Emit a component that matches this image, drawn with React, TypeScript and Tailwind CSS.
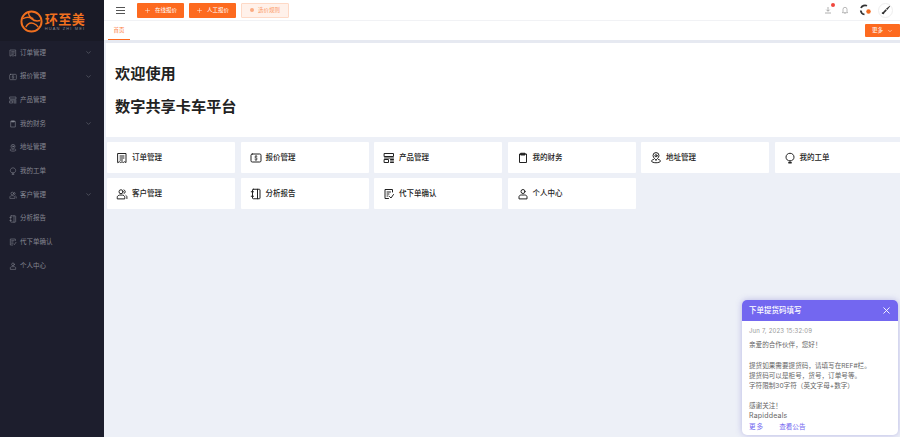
import React from 'react';
import { ChevronDown, Plus, X } from 'lucide-react';

const cjk = "font-['Inter','Noto_Sans_CJK_SC',sans-serif]";

type IconName = 'order' | 'quote' | 'product' | 'finance' | 'address' | 'ticket' | 'customer' | 'report' | 'confirm' | 'person';

function MenuIcon({ name, className, weight = 1.7 }: { name: IconName; className?: string; weight?: number }) {
  const shared = { fill: 'none', stroke: 'currentColor', strokeWidth: weight, strokeLinecap: 'round' as const, strokeLinejoin: 'round' as const };
  return (
    <svg viewBox="0 0 24 24" className={className} {...shared}>
      {name === 'order' && (
        <>
          <path d="M4 3h16v18l-3-1.500-2.500 1.500-2.500-1.500L9.500 21 7 19.500 4 21z" />
          <path d="M8 8h8M8 12h8M8 16h5" />
        </>
      )}
      {name === 'quote' && (
        <>
          <rect x="2" y="4" width="20" height="16" rx="2.500" />
          <path d="M14.500 9.500c-.5-1-1.500-1.300-2.500-1.300-1.400 0-2.500.7-2.500 1.800 0 2.500 5 1.400 5 3.900 0 1.100-1.100 1.900-2.500 1.900-1.100 0-2.100-.4-2.600-1.400M12 6.800v10.400" strokeWidth="1.300" />
        </>
      )}
      {name === 'product' && (
        <>
          <rect x="3" y="3" width="18" height="6" />
          <rect x="3" y="15" width="8" height="6" />
          <path d="M3 12h18M15 15h6M15 18h6M15 21h6" />
        </>
      )}
      {name === 'finance' && (
        <>
          <path d="M8 4H5v17h14V4h-3" />
          <rect x="8" y="2.500" width="8" height="3.500" fill="currentColor" />
        </>
      )}
      {name === 'address' && (
        <>
          <path d="M12 16s-6-4.300-6-8.800a6 6 0 0 1 12 0C18 11.700 12 16 12 16z" />
          <circle cx="12" cy="7.500" r="2.200" />
          <path d="M7 15c-2.500.7-4 1.800-4 3 0 1.900 4 3.500 9 3.500s9-1.600 9-3.500c0-1.200-1.500-2.300-4-3" />
        </>
      )}
      {name === 'ticket' && (
        <>
          <path d="M12 18c-4.500 0-8-3.200-8-7.700C4 6 7.500 2.500 12 2.500s8 3.500 8 7.800c0 4.500-3.500 7.700-8 7.700z" />
          <path d="M9.500 21.500h5" strokeWidth="2.600" />
        </>
      )}
      {name === 'customer' && (
        <>
          <circle cx="10" cy="7.500" r="4" />
          <path d="M2.500 21v-2.500c0-2.800 2.500-4.500 7.500-4.500s7.500 1.700 7.500 4.500V21z" />
          <path d="M16 3.800a4 4 0 0 1 0 7.400M20 14.800c1.200.8 1.800 2 1.800 3.400V21" />
        </>
      )}
      {name === 'report' && (
        <>
          <rect x="5" y="2.500" width="15" height="19" rx="1.500" />
          <path d="M15 2.500v19M2.500 7.500H7M2.500 16.500H7" />
        </>
      )}
      {name === 'confirm' && (
        <>
          <path d="M19 8V3H4v18h7" />
          <path d="M8 8h7M8 12h4M8 16h2M13 17l3 3 5-7" />
        </>
      )}
      {name === 'person' && (
        <>
          <circle cx="12" cy="7" r="4" />
          <path d="M4 21v-3.500C4 15.500 6 14 8.500 14h7c2.500 0 4.500 1.500 4.500 3.500V21z" />
        </>
      )}
    </svg>
  );
}

const sideItems: { label: string; icon: IconName; arrow?: boolean }[] = [
  { label: '订单管理', icon: 'order', arrow: true },
  { label: '报价管理', icon: 'quote', arrow: true },
  { label: '产品管理', icon: 'product' },
  { label: '我的财务', icon: 'finance', arrow: true },
  { label: '地址管理', icon: 'address' },
  { label: '我的工单', icon: 'ticket' },
  { label: '客户管理', icon: 'customer', arrow: true },
  { label: '分析报告', icon: 'report' },
  { label: '代下单确认', icon: 'confirm' },
  { label: '个人中心', icon: 'person' },
];

const cards: { label: string; icon: IconName }[] = [
  { label: '订单管理', icon: 'order' },
  { label: '报价管理', icon: 'quote' },
  { label: '产品管理', icon: 'product' },
  { label: '我的财务', icon: 'finance' },
  { label: '地址管理', icon: 'address' },
  { label: '我的工单', icon: 'ticket' },
  { label: '客户管理', icon: 'customer' },
  { label: '分析报告', icon: 'report' },
  { label: '代下单确认', icon: 'confirm' },
  { label: '个人中心', icon: 'person' },
];

function Logo() {
  return (
    <div className="flex h-[41px] items-center justify-center gap-[2px] bg-[#191a26] pl-[1px] pt-[2px]">
      <svg viewBox="0 0 24 24" className="h-[23px] w-[23px] text-[#f0701f]" fill="none" stroke="currentColor" strokeWidth="2">
        <circle cx="12" cy="12" r="10.500" />
        <path d="M3 9c4-2 7-2 9 0s5 3 9 2M6 18c2-4 5-5 8-4s4 2 5 4M9 3c0 3 2 5 5 6" strokeWidth="1.500" />
      </svg>
      <div className="flex flex-col items-center">
        <span className={`${cjk} text-[13px] font-bold leading-[14px] tracking-[0.5px] text-[#f0701f]`}>环至美</span>
        <span className="font-['Liberation_Sans',sans-serif] text-[4px] leading-[5px] tracking-[1.100px] text-[#8b8b93]">HUAN ZHI MEI</span>
      </div>
    </div>
  );
}

function Sidebar() {
  return (
    <aside className="flex w-[104px] shrink-0 flex-col bg-[#1d1e2d]">
      <Logo />
      <nav className="flex flex-col">
        {sideItems.map((item) => (
          <div key={item.label} className="flex h-[23.700px] items-center pl-[9px] pr-[12px] text-[#858792]">
            <MenuIcon name={item.icon} className="h-[8px] w-[8px]" />
            <span className={`${cjk} ml-[3px] flex-1 text-[6.500px] leading-none`}>{item.label}</span>
            {item.arrow && <ChevronDown className="h-[7px] w-[7px]" strokeWidth={1.500} />}
          </div>
        ))}
      </nav>
    </aside>
  );
}

function TopBar() {
  return (
    <div className="flex h-[21px] items-center border-b border-[#f1f2f5] bg-white pl-[12px] pr-[7px]">
      <div className="flex w-[9px] flex-col gap-[2px]">
        <span className="h-px bg-[#555]" />
        <span className="h-px bg-[#555]" />
        <span className="h-px bg-[#555]" />
      </div>
      <button className={`${cjk} ml-[12px] flex h-[15px] w-[47px] items-center justify-center gap-[4px] rounded-[1px] bg-[#fd6a1f] text-[5.500px] text-white`}>
        <Plus className="h-[7px] w-[7px]" strokeWidth={1.500} />
        在线报价
      </button>
      <button className={`${cjk} ml-[5px] flex h-[15px] w-[47px] items-center justify-center gap-[4px] rounded-[1px] bg-[#fd6a1f] text-[5.500px] text-white`}>
        <Plus className="h-[7px] w-[7px]" strokeWidth={1.500} />
        人工报价
      </button>
      <button className={`${cjk} ml-[5px] flex h-[15px] w-[48px] items-center justify-center gap-[4px] rounded-[1px] border border-[#fed9c6] bg-[#fff1ea] text-[5.500px] text-[#fb9a68]`}>
        <span className="h-[4px] w-[4px] rounded-full bg-[#fbab82]" />
        选价规则
      </button>
      <div className="ml-auto flex items-center">
        <div className="relative">
          <svg viewBox="0 0 24 24" className="h-[8px] w-[8px] text-[#888]" fill="none" stroke="currentColor" strokeWidth="2">
            <path d="M12 3v12M7 11l5 5 5-5M3 21h18" />
          </svg>
          <span className="absolute -right-[3px] -top-[3px] h-[4px] w-[4px] rounded-full bg-[#f0473e]" />
        </div>
        <svg viewBox="0 0 24 24" className="ml-[9px] h-[8px] w-[8px] text-[#999]" fill="none" stroke="currentColor" strokeWidth="2">
          <path d="M6 18V10a6 6 0 0 1 12 0v8l2 2H4zM10 22h4" />
        </svg>
        <svg viewBox="0 0 24 24" className="ml-[10px] h-[12px] w-[12px]" fill="none" strokeWidth="3.500">
          <path d="M16 3.500A9 9 0 0 0 4 8M3.500 13A9 9 0 0 0 11 21" stroke="#333" />
          <circle cx="19" cy="15" r="4.500" fill="#f26a1e" stroke="none" />
        </svg>
        <div className="ml-[7px] flex h-[15px] w-[15px] items-center justify-center rounded-full border border-[#eee]">
          <svg viewBox="0 0 24 24" className="h-[10px] w-[10px]" fill="#333">
            <path d="M21 2l1 1-7 9-3-3zM11 10l3 3-6 6-1 3-5-1 0-3 3-1z" />
          </svg>
        </div>
      </div>
    </div>
  );
}

function TabBar() {
  return (
    <div className="flex h-[19px] items-start justify-between bg-white">
      <div className={`${cjk} ml-[4px] flex h-[19px] w-[22px] items-center justify-center border-b border-[#fd6a1f] text-[5.500px] text-[#fd7a38]`}>首页</div>
      <button className={`${cjk} mt-[3px] flex h-[13px] w-[35px] items-center justify-center gap-[4px] rounded-[1px] bg-[#fd6a1f] text-[5.500px] text-white`}>
        更多
        <ChevronDown className="h-[6px] w-[6px]" />
      </button>
    </div>
  );
}

function Notice() {
  return (
    <div className={`${cjk} absolute bottom-[2px] right-[2px] w-[156px] overflow-hidden rounded-[5px] bg-white shadow-[0_0_6px_rgba(90,80,200,0.35)]`}>
      <div className="flex h-[21px] items-center justify-between bg-[#7367f0] pl-[7px] pr-[6px] text-white">
        <span className="text-[7.500px] font-medium">下单提货码填写</span>
        <X className="h-[11px] w-[11px]" strokeWidth={2} />
      </div>
      <div className="px-[7px] pt-[5px] text-[6.600px] leading-[10px] text-[#666]">
        <p className="text-[6px] tracking-[0.2px] text-[#999]">Jun 7, 2023 15:32:09</p>
        <p className="mt-[4px]">亲爱的合作伙伴，您好！</p>
        <p className="mt-[11px]">提货如果需要提货码，请填写在REF#栏。</p>
        <p>提货码可以是柜号，货号，订单号等。</p>
        <p>字符限制30字符（英文字母+数字）</p>
        <p className="mt-[10px]">感谢关注！</p>
        <p className="text-[7px] tracking-[0.2px]">Rapiddeals</p>
        <div className="mt-px flex gap-[15px] pb-[3px] text-[#7367f0]">
          <span className="tracking-[1px]">更多</span>
          <span>查看公告</span>
        </div>
      </div>
    </div>
  );
}

export default function App() {
  return (
    <div className="relative flex h-[437px] w-[900px] overflow-hidden bg-[#edf0f7]">
      <Sidebar />
      <main className="flex min-w-0 flex-1 flex-col">
        <TopBar />
        <TabBar />
        <div className="h-[3px] bg-[#e6e9f1]" />
        <section className={`${cjk} ml-[2px] flex h-[94px] flex-col justify-center gap-[15px] bg-white pl-[9px] text-[15.200px] font-bold leading-[18px] text-[#222]`}>
          <div>欢迎使用</div>
          <div>数字共享卡车平台</div>
        </section>
        <div className="ml-[3px] mt-[5px] grid grid-cols-[128px_128px_128px_128px_128px_128px] gap-x-[5.500px] gap-y-[5px]">
          {cards.map((card) => (
            <div key={card.label} className="flex h-[31px] items-center gap-[4px] rounded-[1px] bg-white pl-[9px] text-[#222]">
              <MenuIcon name={card.icon} className="h-[12px] w-[12px]" weight={2} />
              <span className={`${cjk} text-[7.500px] font-medium`}>{card.label}</span>
            </div>
          ))}
        </div>
      </main>
      <Notice />
    </div>
  );
}
